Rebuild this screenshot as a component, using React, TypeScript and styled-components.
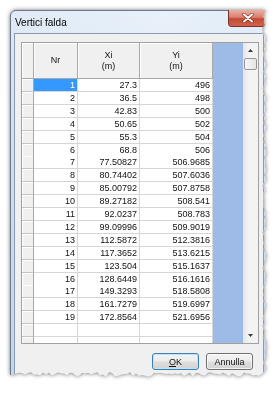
import React from 'react'
import styled, { createGlobalStyle } from 'styled-components'

const GlobalStyle = createGlobalStyle`
  html, body {
    margin: 0;
    padding: 0;
    background: #fff;
  }
  body {
    width: 280px;
    height: 394px;
    overflow: hidden;
    font-family: 'Liberation Sans', Arial, sans-serif;
  }
`

// window box, before the torn edge is cut into it
const WIN_W = 258
const WIN_H = 368
const ROW_H = 12.9

const noise = (i: number) => {
  const v = Math.sin(i * 12.9898 + 78.233) * 43758.5453
  return v - Math.floor(v)
}

const tornEdge = (() => {
  const pts: string[] = ['0px 0px']
  for (let y = 0; y <= WIN_H - 6; y += 3) {
    pts.push(`${(WIN_W - 1.5 - noise(y) * 4.5).toFixed(1)}px ${y}px`)
  }
  for (let x = WIN_W - 6; x >= 0; x -= 3) {
    pts.push(`${x}px ${(WIN_H - 1.5 - noise(x + 500) * 4.5).toFixed(1)}px`)
  }
  pts.push(`0px ${WIN_H - 4}px`)
  return `polygon(${pts.join(', ')})`
})()

// whole-pixel height of row i, so the grid lines stay crisp
const rowHeight = (i: number) => Math.round((i + 1) * ROW_H) - Math.round(i * ROW_H)

const rows: [string, string][] = [
  ['27.3', '496'],
  ['36.5', '498'],
  ['42.83', '500'],
  ['50.65', '502'],
  ['55.3', '504'],
  ['68.8', '506'],
  ['77.50827', '506.9685'],
  ['80.74402', '507.6036'],
  ['85.00792', '507.8758'],
  ['89.27182', '508.541'],
  ['92.0237', '508.783'],
  ['99.09996', '509.9019'],
  ['112.5872', '512.3816'],
  ['117.3652', '513.6215'],
  ['123.504', '515.1637'],
  ['128.6449', '516.1616'],
  ['149.3293', '518.5808'],
  ['161.7279', '519.6997'],
  ['172.8564', '521.6956']
]

const Page = styled.div`
  padding: 10px 0 0 10px;
`

const Shadow = styled.div`
  width: ${WIN_W}px;
  filter: drop-shadow(0 0 2px rgba(0, 0, 0, 0.55));
`

const Window = styled.div`
  width: ${WIN_W}px;
  height: ${WIN_H}px;
  box-sizing: border-box;
  border: 1px solid #6a7a8e;
  border-radius: 6px 6px 0 0;
  background: linear-gradient(180deg, #dde9f6 0%, #cfdff1 40%, #c2d6ee 100%);
  clip-path: ${tornEdge};
  display: flex;
  flex-direction: column;
`

const TitleBar = styled.div`
  height: 22px;
  display: flex;
  align-items: flex-start;
  background: linear-gradient(90deg, rgba(255, 255, 255, 0.1) 0%, rgba(255, 255, 255, 0.35) 60%, rgba(255, 255, 255, 0.15) 100%);
`

const Title = styled.div`
  flex: 1;
  padding-left: 4px;
  line-height: 23px;
  font-size: 10px;
  color: #000;
`

const CloseButton = styled.div`
  width: 39px;
  height: 17px;
  margin-top: -1px;
  box-sizing: border-box;
  border: 1px solid #7a3328;
  border-top: none;
  border-radius: 0 0 4px 4px;
  background: linear-gradient(180deg, #eab0a3 0%, #d9806d 45%, #c44a35 55%, #d0634c 100%);
  display: flex;
  align-items: center;
  justify-content: center;
`

const Client = styled.div`
  flex: 1;
  margin: 0 3px;
  border: 1px solid #8a9bb1;
  border-bottom: none;
  background: #f0f0f0;
  padding: 8px 4px 0 6px;
  display: flex;
  flex-direction: column;
`

const GridFrame = styled.div`
  width: 238px;
  height: 302px;
  box-sizing: border-box;
  border: 1px solid #a0a0a0;
  background: #fff;
  display: flex;
`

const Table = styled.div`
  width: 191px;
  display: flex;
  flex-direction: column;
  overflow: hidden;
`

const HeaderRow = styled.div`
  display: grid;
  grid-template-columns: 12px 44px 62px 73px;
  height: 36px;
  flex-shrink: 0;
`

const HeaderCell = styled.div`
  box-sizing: border-box;
  background: #f0f0f0;
  border-right: 1px solid #a8a8a8;
  border-bottom: 1px solid #a8a8a8;
  box-shadow: inset 1px 1px 0 #fff;
  display: flex;
  align-items: center;
  justify-content: center;
  text-align: center;
  font-size: 9px;
  line-height: 11px;
  color: #111;
`

const BodyRow = styled.div`
  display: grid;
  grid-template-columns: 12px 44px 62px 73px;
  flex-shrink: 0;
`

const RowHead = styled.div`
  box-sizing: border-box;
  background: #f0f0f0;
  border-right: 1px solid #a8a8a8;
  border-bottom: 1px solid #c4c4c4;
  box-shadow: inset 1px 1px 0 #fff;
`

const Cell = styled.div<{ $selected?: boolean }>`
  box-sizing: border-box;
  border-right: 1px solid #d6d6d6;
  border-bottom: 1px solid #d6d6d6;
  padding: 1px 2px 0 0;
  text-align: right;
  font-size: 9px;
  line-height: 11px;
  color: ${p => (p.$selected ? '#fff' : '#111')};
  background: ${p => (p.$selected ? '#3399ff' : '#fff')};
  white-space: nowrap;
`

const Filler = styled.div`
  width: 30px;
  background: #9dbbe6;
`

const ScrollBar = styled.div`
  width: 15px;
  box-sizing: border-box;
  background: linear-gradient(90deg, #e6e6e6 0%, #f3f3f3 35%, #f3f3f3 100%);
  display: flex;
  flex-direction: column;
`

const ArrowButton = styled.div`
  height: 15px;
  display: flex;
  align-items: center;
  justify-content: center;
`

const Thumb = styled.div`
  height: 12px;
  margin: 0 1px;
  box-sizing: border-box;
  border: 1px solid #979797;
  border-radius: 2px;
  background: linear-gradient(90deg, #f6f6f6 0%, #e6e6e6 100%);
`

const Track = styled.div`
  flex: 1;
`

const ButtonRow = styled.div`
  display: flex;
  justify-content: flex-end;
  gap: 7px;
  margin-top: 9px;
  padding-right: 6px;
`

const Button = styled.div<{ $default?: boolean }>`
  width: 47px;
  height: 17px;
  box-sizing: border-box;
  border: 1px solid ${p => (p.$default ? '#3c7fb1' : '#707070')};
  border-radius: 3px;
  background: linear-gradient(180deg, #f4f4f4 0%, #ececec 48%, #dedede 52%, #d2d2d2 100%);
  box-shadow: inset 0 0 0 1px ${p => (p.$default ? '#bde4f8' : 'rgba(255,255,255,0.7)')};
  display: flex;
  align-items: center;
  justify-content: center;
  font-size: 9px;
  color: #111;
`

const Arrow = ({ down }: { down?: boolean }) => (
  <svg width="5" height="3" viewBox="0 0 5 3">
    <polygon points={down ? '0,0 5,0 2.5,3' : '2.5,0 5,3 0,3'} fill="#3a3a3a" />
  </svg>
)

const CloseGlyph = () => (
  <svg width="12" height="10" viewBox="0 0 12 10">
    <path d="M2 1.5 L10 8.5 M10 1.5 L2 8.5" stroke="rgba(80,10,0,0.55)" strokeWidth="3.6" strokeLinecap="round" />
    <path d="M2 1.5 L10 8.5 M10 1.5 L2 8.5" stroke="#fff" strokeWidth="2" strokeLinecap="round" />
  </svg>
)

const App = () => (
  <>
    <GlobalStyle />
    <Page>
      <Shadow>
        <Window>
          <TitleBar>
            <Title>Vertici falda</Title>
            <CloseButton>
              <CloseGlyph />
            </CloseButton>
          </TitleBar>
          <Client>
            <GridFrame>
              <Table>
                <HeaderRow>
                  <HeaderCell />
                  <HeaderCell>Nr</HeaderCell>
                  <HeaderCell>Xi<br />(m)</HeaderCell>
                  <HeaderCell>Yi<br />(m)</HeaderCell>
                </HeaderRow>
                {rows.map(([x, y], i) => (
                  <BodyRow key={i} style={{ height: rowHeight(i) }}>
                    <RowHead />
                    <Cell $selected={i === 0}>{i + 1}</Cell>
                    <Cell>{x}</Cell>
                    <Cell>{y}</Cell>
                  </BodyRow>
                ))}
                {[19, 20].map(i => (
                  <BodyRow key={i} style={{ height: rowHeight(i) }}>
                    <RowHead />
                    <Cell />
                    <Cell />
                    <Cell />
                  </BodyRow>
                ))}
              </Table>
              <Filler />
              <ScrollBar>
                <ArrowButton>
                  <Arrow />
                </ArrowButton>
                <Thumb />
                <Track />
                <ArrowButton>
                  <Arrow down />
                </ArrowButton>
              </ScrollBar>
            </GridFrame>
            <ButtonRow>
              <Button $default>
                <span><u>O</u>K</span>
              </Button>
              <Button>Annulla</Button>
            </ButtonRow>
          </Client>
        </Window>
      </Shadow>
    </Page>
  </>
)

export default App
